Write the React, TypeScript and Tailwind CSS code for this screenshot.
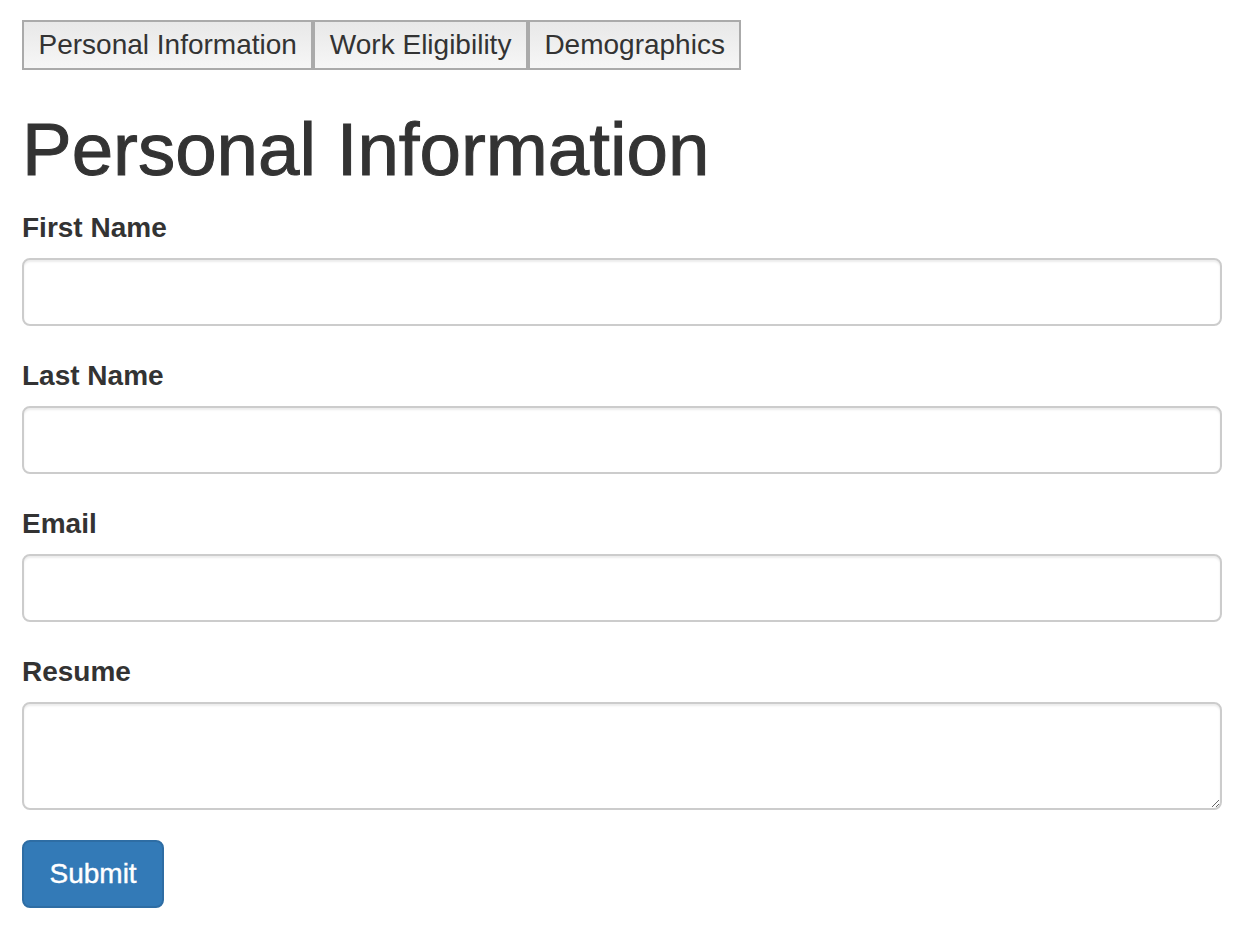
import React from 'react';

const TABS = ['Personal Information', 'Work Eligibility', 'Demographics'];

const FIELDS = [
  { id: 'firstName', label: 'First Name' },
  { id: 'lastName', label: 'Last Name' },
  { id: 'email', label: 'Email' },
];

const inputClass =
  'block w-full rounded-[8px] border-2 border-[#cccccc] bg-white px-[24px] text-[28px] text-[#555] shadow-[inset_0_2px_2px_rgba(0,0,0,0.075)] outline-none';

export default function App() {
  return (
    <div
      className="min-h-screen bg-white px-[22px] pt-[20px] text-[#333333]"
      style={{ fontFamily: '"Liberation Sans", Arial, sans-serif' }}
    >
      {/* Tabs */}
      <div className="flex">
        {TABS.map((tab) => (
          <button
            key={tab}
            type="button"
            className="h-[50px] border-2 border-[#aaaaaa] bg-gradient-to-b from-[#e8e8e8] to-[#f6f6f6] px-[14.5px] text-[28px] leading-[46px] text-[#333333]"
          >
            {tab}
          </button>
        ))}
      </div>

      <h1 className="mt-[40px] mb-[19px] text-[74.5px] font-normal leading-[79px] text-[#333333] [-webkit-text-stroke:1px_#333333]">
        Personal Information
      </h1>

      <form onSubmit={(e) => e.preventDefault()}>
        {FIELDS.map((f) => (
          <div key={f.id} className="mb-[30px]">
            <label htmlFor={f.id} className="mb-[10px] block text-[28px] font-bold leading-[40px]">
              {f.label}
            </label>
            <input id={f.id} type="text" className={`${inputClass} h-[68px]`} />
          </div>
        ))}

        <div className="mb-[30px]">
          <label htmlFor="resume" className="mb-[10px] block text-[28px] font-bold leading-[40px]">
            Resume
          </label>
          <textarea id="resume" className={`${inputClass} h-[108px] resize-y py-[12px]`} />
        </div>

        <button
          type="submit"
          className="h-[68px] rounded-[8px] border-2 border-[#2e6da4] bg-[#337ab7] px-[25.5px] text-[28px] leading-[40px] text-white [-webkit-text-stroke:0.4px_#ffffff]"
        >
          Submit
        </button>
      </form>
    </div>
  );
}
